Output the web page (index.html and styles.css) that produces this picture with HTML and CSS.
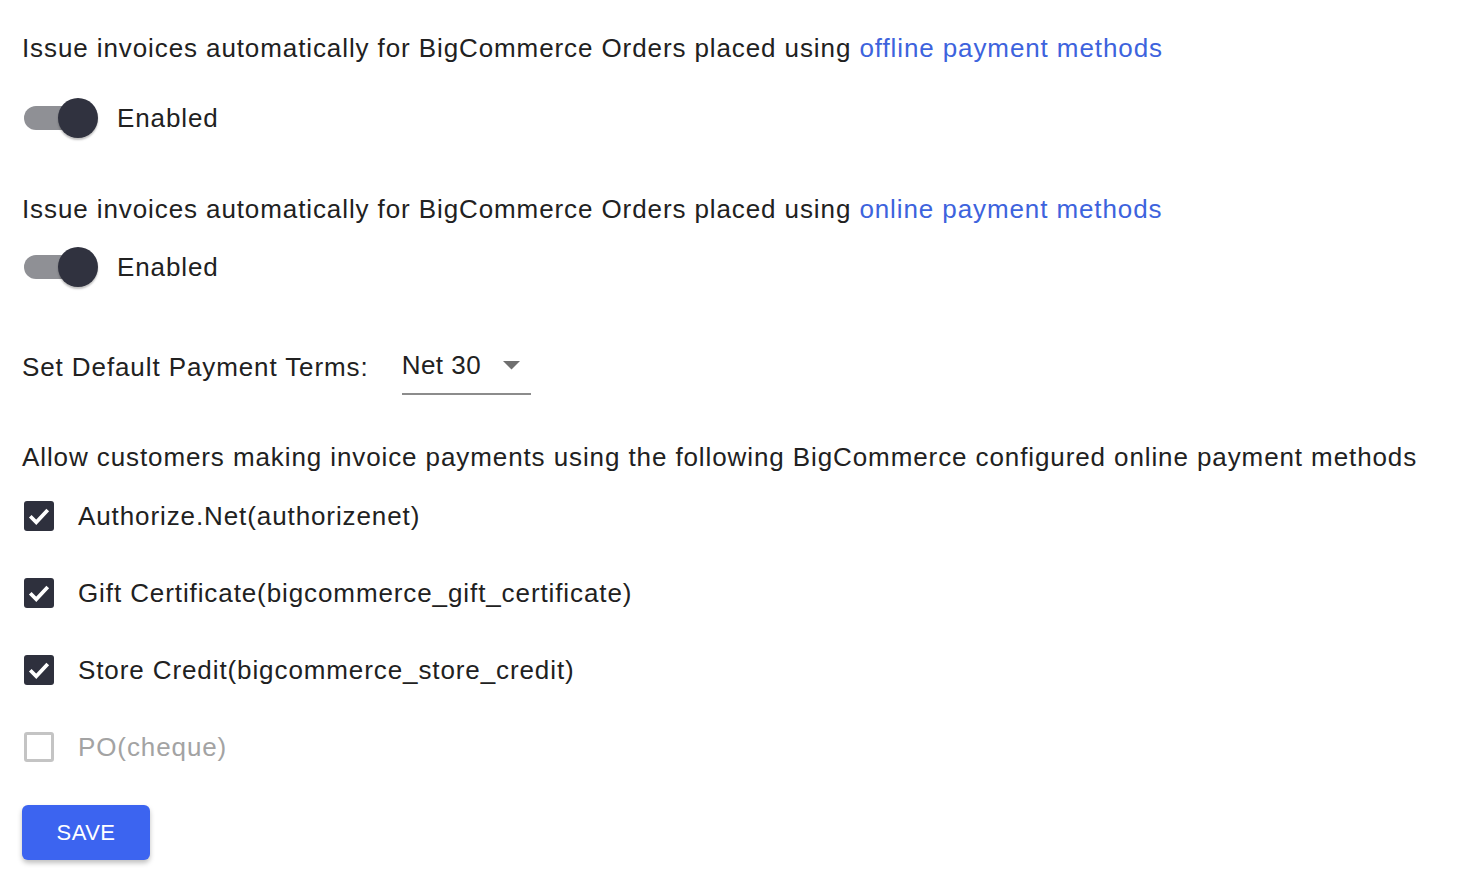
FILE: index.html
```html
<!DOCTYPE html>
<html lang="en">
<head>
    <meta charset="UTF-8">
    <title>Invoice Settings</title>
    <link rel="stylesheet" href="styles.css">
</head>
<body>
    <div class="settings">
        <section class="setting first">
            <p class="setting-title">Issue invoices automatically for BigCommerce Orders placed using <a href="#">offline payment methods</a></p>
            <label class="switch-row">
                <span class="switch on"><span class="track"></span><span class="thumb"></span></span>
                <span>Enabled</span>
            </label>
        </section>

        <section class="setting second">
            <p class="setting-title">Issue invoices automatically for BigCommerce Orders placed using <a href="#">online payment methods</a></p>
            <label class="switch-row">
                <span class="switch on"><span class="track"></span><span class="thumb"></span></span>
                <span>Enabled</span>
            </label>
        </section>

        <section class="terms">
            <span class="terms-label">Set Default Payment Terms:</span>
            <div class="select">
                <span>Net 30</span>
                <svg class="arrow" width="17" height="9" viewBox="0 0 17 9"><path d="M0 0 L17 0 L8.5 8.5 Z" fill="#6f6f6f"/></svg>
            </div>
        </section>

        <section class="methods">
            <p class="setting-title">Allow customers making invoice payments using the following BigCommerce configured online payment methods</p>
            <label class="check-row">
                <span class="box checked"><svg viewBox="0 0 24 24"><path d="M5 12.2 L9.8 17 L19 7.2" fill="none" stroke="#fff" stroke-width="3"/></svg></span>
                <span>Authorize.Net(authorizenet)</span>
            </label>
            <label class="check-row">
                <span class="box checked"><svg viewBox="0 0 24 24"><path d="M5 12.2 L9.8 17 L19 7.2" fill="none" stroke="#fff" stroke-width="3"/></svg></span>
                <span>Gift Certificate(bigcommerce_gift_certificate)</span>
            </label>
            <label class="check-row">
                <span class="box checked"><svg viewBox="0 0 24 24"><path d="M5 12.2 L9.8 17 L19 7.2" fill="none" stroke="#fff" stroke-width="3"/></svg></span>
                <span>Store Credit(bigcommerce_store_credit)</span>
            </label>
            <label class="check-row disabled">
                <span class="box"></span>
                <span>PO(cheque)</span>
            </label>
        </section>

        <button class="save">SAVE</button>
    </div>
</body>
</html>
```

FILE: styles.css
```css
body {
    margin: 0;
    font-family: "Liberation Sans", Arial, sans-serif;
    color: #212121;
    background: #fff;
}

.settings {
    padding: 30px 22px;
    font-size: 26px;
    letter-spacing: 0.9px;
}

p {
    margin: 0;
}

.setting-title {
    line-height: 36px;
}

.setting-title a {
    color: #3d63dd;
    text-decoration: none;
}

.setting.first {
    margin-bottom: 53px;
}

.switch-row {
    display: flex;
    align-items: center;
    gap: 17px;
    margin-top: 32px;
}

.second .switch-row {
    margin-top: 20px;
}

.switch {
    position: relative;
    width: 76px;
    height: 40px;
    margin-left: 2px;
}

.switch .track {
    position: absolute;
    left: 0;
    top: 8px;
    width: 62px;
    height: 24px;
    border-radius: 12px;
    background: #8f9095;
}

.switch .thumb {
    position: absolute;
    left: 34px;
    top: 0;
    width: 40px;
    height: 40px;
    border-radius: 50%;
    background: #30323f;
    box-shadow: 0 2px 2px rgba(0, 0, 0, 0.25);
}

.terms {
    display: flex;
    align-items: flex-start;
    gap: 33px;
    margin-top: 62px;
}

.terms-label {
    line-height: 36px;
}

.select {
    display: flex;
    align-items: center;
    justify-content: space-between;
    width: 118px;
    padding: 0 11px 12px 0;
    line-height: 32px;
    border-bottom: 2px solid #8c8c8c;
    letter-spacing: 0.5px;
}

.methods {
    margin-top: 44px;
}

.check-row {
    display: flex;
    align-items: center;
    gap: 24px;
    height: 36px;
    margin-top: 23px;
    margin-bottom: 41px;
    margin-left: 2px;
}

.check-row + .check-row {
    margin-top: 0;
}

.box {
    width: 30px;
    height: 30px;
    box-sizing: border-box;
    border-radius: 3px;
    border: 3px solid #c4c4c4;
}

.box.checked {
    background: #2e303d;
    border: none;
}

.box svg {
    width: 30px;
    height: 30px;
    display: block;
}

.check-row.disabled {
    color: #a3a3a3;
    margin-top: 1px;
    margin-bottom: 0;
}

.save {
    margin-top: 40px;
    width: 128px;
    height: 55px;
    border: none;
    border-radius: 6px;
    background: #3c64f0;
    color: #fff;
    font-family: "Liberation Sans", Arial, sans-serif;
    font-size: 22px;
    letter-spacing: 0.5px;
    box-shadow: 0 3px 5px rgba(0, 0, 0, 0.25);
}
```
